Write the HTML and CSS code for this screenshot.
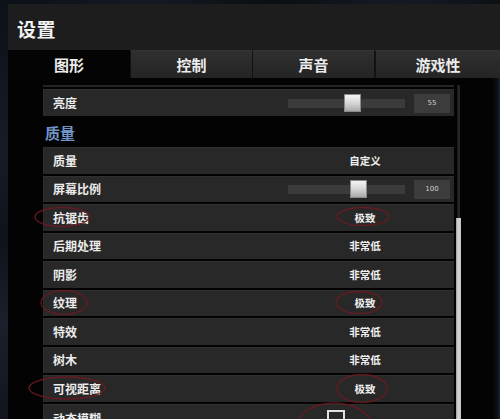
FILE: index.html
```html
<!DOCTYPE html>
<html lang="zh-CN">
<head>
<meta charset="utf-8">
<title>设置</title>
<link rel="stylesheet" href="styles.css">
</head>
<body>
<div class="screen">
  <div class="topstrip"></div>
  <div class="main">
    <div class="gutter"></div>
    <div class="window">
      <div class="titlebar"><h1 class="title">设置</h1></div>
      <div class="tabs">
        <div class="tab active">图形</div>
        <div class="tab">控制</div>
        <div class="tab">声音</div>
        <div class="tab last">游戏性</div>
      </div>
      <div class="content">
        <div class="list">
          <div class="ghost"></div>
          <div class="row first">
            <span class="label">亮度</span>
            <div class="val">
              <div class="slider"><div class="thumb" style="left:56px"></div></div>
              <div class="num">55</div>
            </div>
          </div>
          <div class="section">质量</div>
          <div class="row">
            <span class="label">质量</span>
            <div class="val"><span class="text">自定义</span></div>
          </div>
          <div class="row">
            <span class="label">屏幕比例</span>
            <div class="val">
              <div class="slider"><div class="thumb" style="left:62px"></div></div>
              <div class="num">100</div>
            </div>
          </div>
          <div class="row">
            <span class="label">抗锯齿</span>
            <div class="val"><span class="text">极致</span></div>
          </div>
          <div class="row">
            <span class="label">后期处理</span>
            <div class="val"><span class="text">非常低</span></div>
          </div>
          <div class="row">
            <span class="label">阴影</span>
            <div class="val"><span class="text">非常低</span></div>
          </div>
          <div class="row">
            <span class="label">纹理</span>
            <div class="val"><span class="text">极致</span></div>
          </div>
          <div class="row">
            <span class="label">特效</span>
            <div class="val"><span class="text">非常低</span></div>
          </div>
          <div class="row">
            <span class="label">树木</span>
            <div class="val"><span class="text">非常低</span></div>
          </div>
          <div class="row">
            <span class="label">可视距离</span>
            <div class="val"><span class="text">极致</span></div>
          </div>
          <div class="row top">
            <span class="label">动态模糊</span>
            <div class="val"><span class="check"></span></div>
          </div>
        </div>
        <div class="scrollbar">
          <div class="track"></div>
          <div class="sthumb"></div>
        </div>
        <div class="backdrop"></div>
      </div>
    </div>
  </div>
  <svg class="marks" width="500" height="419" viewBox="0 0 500 419">
    <g fill="none" stroke="#6e1a20" stroke-width="1.4" opacity="0.85">
      <ellipse cx="62" cy="217" rx="27" ry="9.5"/>
      <ellipse cx="363" cy="216.5" rx="26" ry="9"/>
      <ellipse cx="64" cy="302.5" rx="23" ry="12"/>
      <ellipse cx="359" cy="302.5" rx="23" ry="11"/>
      <ellipse cx="67" cy="388" rx="38" ry="11"/>
      <ellipse cx="362" cy="388.5" rx="25" ry="14"/>
      <ellipse cx="334" cy="426" rx="37" ry="23"/>
    </g>
  </svg>
</div>
</body>
</html>
```

FILE: styles.css
```css
* { box-sizing: border-box; }

html, body {
  margin: 0;
  padding: 0;
  background: #050608;
}

body {
  font-family: "Noto Sans CJK SC", "Noto Sans", sans-serif;
  font-weight: 700;
  color: #ececec;
}

.screen {
  position: relative;
  width: 500px;
  height: 419px;
  overflow: hidden;
  display: flex;
  flex-direction: column;
  background: #050608;
}

.topstrip {
  height: 4px;
  flex: none;
  background: linear-gradient(90deg, #0c1017 0%, #141a23 30%, #0b0e13 55%, #151b25 80%, #0d1016 100%);
}

.main {
  flex: 1;
  display: flex;
}

.gutter {
  width: 8px;
  flex: none;
  background: linear-gradient(180deg, #0d1118 0%, #161c26 35%, #0f131a 55%, #1a212c 75%, #10141b 100%);
}

.window {
  flex: 1;
  display: flex;
  flex-direction: column;
  background: #030303;
}

.titlebar {
  height: 46px;
  flex: none;
  background: #1d1d1e;
  display: flex;
  align-items: center;
  padding-left: 9px;
}

.title {
  margin: 0;
  font-size: 19px;
  font-weight: 700;
  color: #f2f2f2;
  letter-spacing: 0.5px;
  line-height: 1;
  padding-top: 2px;
}

.tabs {
  height: 28px;
  flex: none;
  display: flex;
  background: #030303;
}

.tab {
  width: 122px;
  flex: none;
  display: flex;
  align-items: center;
  justify-content: center;
  font-size: 15px;
  color: #ececec;
  background: linear-gradient(180deg, #303030 0%, #2a2a2a 45%, #242424 100%);
  border-left: 1px solid #121212;
  border-top: 1px solid #343434;
}

.tab.active {
  background: #040404;
  border-left: none;
  border-top: 1px solid #040404;
}

.tab.last {
  flex: 1;
  width: auto;
  border-left: 2px solid #121212;
}

.content {
  flex: 1;
  display: flex;
  padding-left: 35px;
  background: #030303;
}

.list {
  width: 411px;
  flex: none;
  display: flex;
  flex-direction: column;
}

.ghost {
  margin-top: 7px;
  height: 2px;
  background: #242424;
}

.row {
  height: 26.5px;
  margin-top: 2px;
  flex: none;
  display: flex;
  align-items: center;
  background: #282828;
  border-top: 1px solid #303030;
  border-left: 1px solid #2e2e2e;
}

.row.first {
  height: 27px;
}

.row.top {
  align-items: flex-start;
}

.label {
  flex: 1;
  padding-left: 9px;
  font-size: 12px;
  color: #ececec;
  line-height: 1;
}

.row.top .label {
  padding-top: 8px;
}

.val {
  width: 166px;
  flex: none;
  display: flex;
  align-items: center;
  padding-right: 4px;
  height: 100%;
}

.text {
  width: 154px;
  text-align: center;
  font-size: 10.5px;
  color: #efefef;
  line-height: 1;
}

.slider {
  position: relative;
  width: 117px;
  height: 9px;
  background: #3b3b3b;
}

.thumb {
  position: absolute;
  top: -5px;
  width: 17px;
  height: 18px;
  background: linear-gradient(180deg, #f4f4f4 0%, #d6d6d6 50%, #a9a9a9 100%);
  border: 1px solid #8a8a8a;
}

.num {
  margin-left: 9px;
  width: 36px;
  height: 19px;
  background: #3c3c3c;
  display: flex;
  align-items: center;
  justify-content: center;
  font-family: "DejaVu Sans", sans-serif;
  font-size: 7px;
  font-weight: 400;
  color: #cfcfcf;
}

.check {
  display: block;
  margin-left: 39px;
  margin-top: 3px;
  width: 18px;
  height: 18px;
  border: 2px solid #e0e0e0;
}

.section {
  height: 29px;
  flex: none;
  display: flex;
  align-items: center;
  padding-top: 3px;
  padding-left: 2px;
  font-size: 15px;
  color: #6f95c8;
}

.scrollbar {
  width: 5px;
  margin-left: 2px;
  flex: none;
  display: flex;
  flex-direction: column;
  padding-top: 7px;
}

.track {
  height: 133px;
  flex: none;
  margin: 0 1px 0 1px;
  background: #262626;
  border-left: 1px solid #1a1a1a;
}

.sthumb {
  flex: 1;
  background: linear-gradient(90deg, #9a9a9a 0%, #d8d8d8 40%, #c4c4c4 100%);
}

.backdrop {
  flex: 1;
  background: linear-gradient(90deg, #030303 0%, #030303 80%, #0a0e14 92%, #1a2230 100%);
}

.marks {
  position: absolute;
  left: 0;
  top: 0;
  pointer-events: none;
}
```
